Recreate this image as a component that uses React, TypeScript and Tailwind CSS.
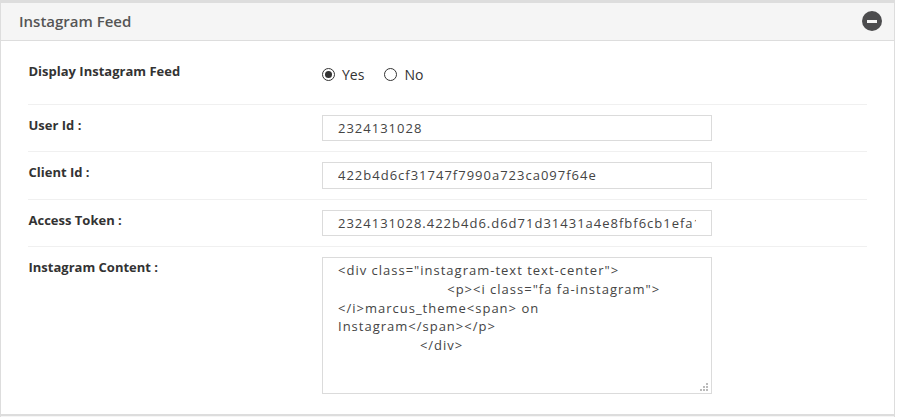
import type { ReactNode } from "react";

const fieldClass =
  "block w-[390px] rounded-none border border-[#dbdbdb] bg-white px-[15px] text-[13px] tracking-[1px] text-[#444] outline-none";

const content =
  '<div class="instagram-text text-center">\n\t\t\t\t<p><i class="fa fa-instagram"></i>marcus_theme<span> on\nInstagram</span></p>\n\t\t\t</div>';

function Row({ label, className, children }: { label: string; className: string; children: ReactNode }) {
  return (
    <div className={`mx-[27px] flex items-start ${className}`}>
      <div className="w-[294px] shrink-0 pl-[0.5px] text-[13px] leading-[20px] font-bold text-[#333]">{label}</div>
      {children}
    </div>
  );
}

function Radio({ label, checked }: { label: string; checked?: boolean }) {
  return (
    <label className="flex items-center">
      <span className="mb-[2px] flex size-[13px] items-center justify-center rounded-full border border-[#333] bg-white">
        {checked && <span className="size-[7px] rounded-full bg-[#333]" />}
      </span>
      <span className="ml-[7px] text-[14px] leading-[20px] text-[#333]">{label}</span>
    </label>
  );
}

export default function App() {
  return (
    <div className="h-[417px] w-[897px] overflow-hidden bg-white font-['Open_Sans',sans-serif]">
      <section className="h-[416px] w-[895px] border-x border-t-[3px] border-b-2 border-[#ddd] bg-white">
        <header className="flex h-[38px] items-center justify-between border-b border-[#ddd] bg-[#f5f5f5] pr-[12px] pl-[18px]">
          <h3 className="mb-[2px] text-[15px] leading-[20px] font-semibold text-[#555]">Instagram Feed</h3>
          <button type="button" aria-label="Collapse" className="mb-px flex size-5 items-center justify-center rounded-full bg-[#4c4c4e]">
            <span className="h-[3px] w-[10px] bg-[#f5f5f5]" />
          </button>
        </header>

        <Row label="Display Instagram Feed" className="h-[64px] border-b border-[#f0f0f0] pt-[20px]">
          <div className="flex gap-[20px] pt-[4px]">
            <Radio label="Yes" checked />
            <Radio label="No" />
          </div>
        </Row>
        <Row label="User Id :" className="h-[47px] border-b border-[#f0f0f0] pt-[10px]">
          <input className={`${fieldClass} h-[26px]`} defaultValue="2324131028" />
        </Row>
        <Row label="Client Id :" className="h-[48px] border-b border-[#f0f0f0] pt-[10px]">
          <input className={`${fieldClass} h-[27px] pb-px`} defaultValue="422b4d6cf31747f7990a723ca097f64e" />
        </Row>
        <Row label="Access Token :" className="h-[47px] border-b border-[#f0f0f0] pt-[10px]">
          <input className={`${fieldClass} h-[26px]`} defaultValue="2324131028.422b4d6.d6d71d31431a4e8fbf6cb1efa1" />
        </Row>
        <Row label="Instagram Content :" className="pt-[10px]">
          <div className="relative">
            <textarea
              className={`${fieldClass} h-[137px] resize-none overflow-hidden pt-[3.43px] leading-[18.57px] [tab-size:27.3px]`}
              defaultValue={content}
            />
            <svg className="absolute right-[4px] bottom-[3px]" width="8" height="8" fill="#bbb" shapeRendering="crispEdges">
              <path d="M6 0h2v2H6zM3 3h2v2H3zM6 3h2v2H6zM0 6h2v2H0zM3 6h2v2H3zM6 6h2v2H6z" />
            </svg>
          </div>
        </Row>
      </section>
      <div className="h-px w-[895px] border-x border-[#ddd] bg-[#f5f5f5]" />
    </div>
  );
}
